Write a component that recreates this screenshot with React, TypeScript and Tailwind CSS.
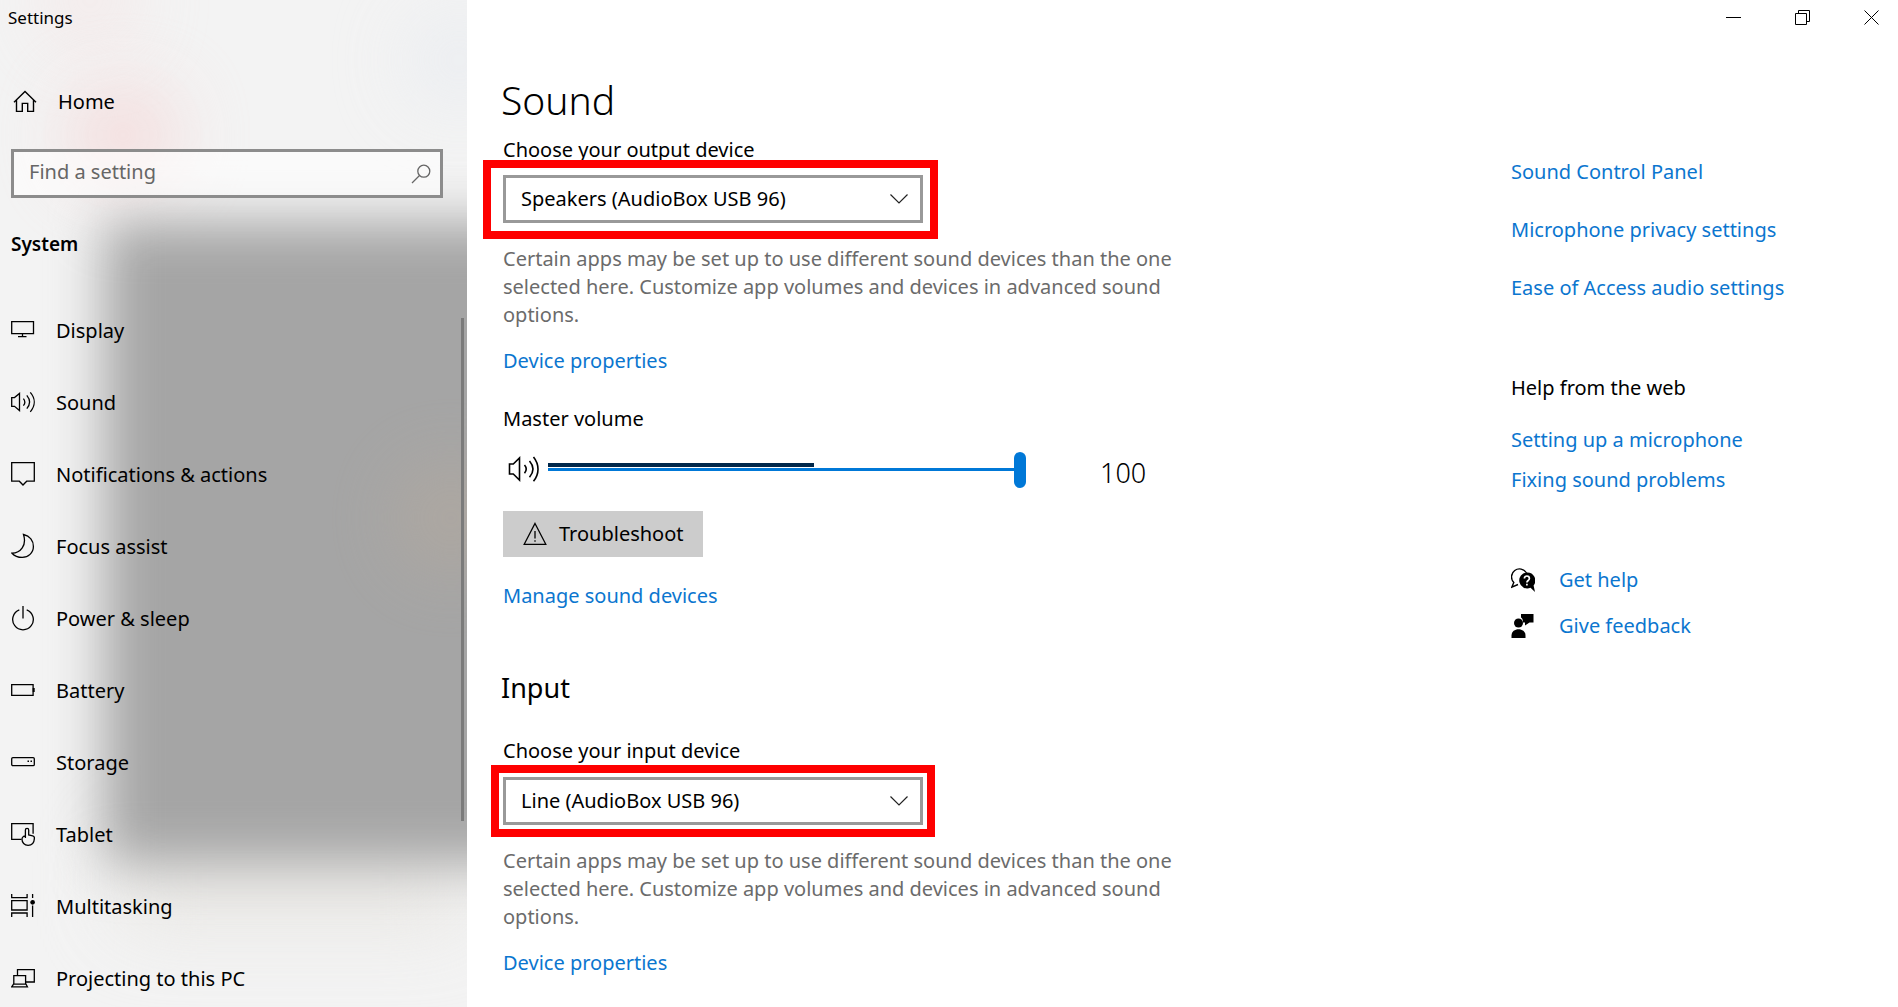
import { useState } from "react";
import type { ReactNode } from "react";

function NavIcon({ children }: { children: ReactNode }) {
  return (
    <svg viewBox="0 0 24 28" className="h-7 w-6 shrink-0" fill="none" stroke="#000" strokeWidth="1.3" aria-hidden="true">
      {children}
    </svg>
  );
}

const navItems: { label: string; icon: ReactNode }[] = [
  { label: "Display", icon: <path d="M.7 4.6h21.8v12H.7zM11.5 16.6v3M7 19.6h8.5" /> },
  {
    label: "Sound",
    icon: <path d="M.7 8.6h2.8l5-4.2v17.2l-5-4.3H.7zM12.4 9.6c2 2.5 2 4.7 0 7M15.8 6.4c3.6 4.3 3.6 9 0 13.3M19.3 3.4c5.2 6 5.2 13.2 0 19.4" />,
  },
  { label: "Notifications & actions", icon: <path d="M.7 1.6h22.6v18.6h-7.6L12 24l-3.7-3.8H.7z" /> },
  {
    label: "Focus assist",
    icon: <path d="M12.5 1.5C19 3 22.4 8 22.4 13.6c0 6.3-5.2 10.8-11.2 10.8-4.2 0-7.8-1.5-10.2-4.2C9.5 20 16 12.5 12.5 1.5z" />,
  },
  { label: "Power & sleep", icon: <path d="M8.3 4.9a10.3 10.3 0 1 0 7.4 0M12 1v12.4" /> },
  {
    label: "Battery",
    icon: (
      <>
        <path d="M.7 7.7h21.4v10.6H.7z" />
        <path d="M22.7 11v4" strokeWidth="2" />
      </>
    ),
  },
  {
    label: "Storage",
    icon: (
      <>
        <rect x=".7" y="8.6" width="22.6" height="8" rx="1.2" />
        <path d="M16.5 12.3h1.5M19.5 12.3h1.5" strokeWidth="1.5" />
      </>
    ),
  },
  {
    label: "Tablet",
    icon: (
      <>
        <path d="M10.5 18.3H.7V2.7h21.4v10" />
        <path d="M14.4 17V9c0-2.1 3.3-2.1 3.3 0v5l4 .8c1.2.3 1.7 1 1.7 2.2-.1 4.400-2 7.300-6.300 7.300-3.800 0-6.100-2.800-6.100-6 0-2 1.400-3.300 3.400-3.300" />
      </>
    ),
  },
  {
    label: "Multitasking",
    icon: (
      <>
        <path d="M.7 1v3.7h15.4V1M.7 7.7h15.4V17H.7zM.7 24v-4h15.4v4M21.6 1v4M21.6 12.5V24" />
        <circle cx="21.6" cy="9.3" r="1.7" fill="#000" />
      </>
    ),
  },
  {
    label: "Projecting to this PC",
    icon: <path d="M6.5 10V4.700h16.800V17h-8.600M2.800 19V10.700h11.800V19M2.500 19.200h12.500l1.400 2.600H.8z" />,
  },
];

function Link({ children }: { children: ReactNode }) {
  return (
    <a href="#" className="text-[#0b76cf] hover:text-gray-500">
      {children}
    </a>
  );
}

function DeviceSelect({ id, value, mark }: { id: string; value: string; mark: string }) {
  return (
    <div className="relative h-12 w-[420px]">
      <select id={id} className="h-full w-full appearance-none border-3 border-[#999999] bg-white pl-[15px] pr-12 text-black outline-none">
        <option>{value}</option>
      </select>
      <svg viewBox="0 0 18 10" className="pointer-events-none absolute right-[15px] top-[19px] h-[10px] w-[18px]" fill="none" stroke="#222" strokeWidth="1.2" aria-hidden="true">
        <path d="M.5 .5 9 9 17.5 .5" />
      </svg>
      <div className={`pointer-events-none absolute border-8 border-[#fe0000] ${mark}`} />
    </div>
  );
}

function AppNote() {
  return (
    <p className="mt-[22px] max-w-[690px] text-[#6b6b6b]">
      Certain apps may be set up to use different sound devices than the one selected here. Customize app volumes and
      devices in advanced sound options.
    </p>
  );
}

function Sidebar() {
  return (
    <aside className="relative flex w-[467px] shrink-0 flex-col overflow-hidden bg-[#f3f3f3]">
      <div className="pointer-events-none absolute inset-0" aria-hidden="true">
        <div className="absolute left-[50px] -top-10 h-20 w-20 rounded-full bg-[#f6dcdc] opacity-60 blur-2xl" />
        <div className="absolute left-[75px] top-[95px] h-20 w-24 rounded-full bg-[#f5d0d0] opacity-90 blur-2xl" />
        <div className="absolute -right-10 top-5 h-20 w-24 rounded-full bg-[#e3e8ef] opacity-70 blur-2xl" />
        <div className="absolute left-[120px] right-0 top-[830px] h-24 bg-[#e6e4e0] opacity-80 blur-2xl" />
        <div className="absolute -right-24 bottom-[144px] left-[104px] top-[222px] bg-[#a5a5a5] blur-[26px]" />
        <div className="absolute -right-8 top-[470px] h-24 w-24 rounded-full bg-[#b5aa9e] opacity-80 blur-2xl" />
      </div>
      <div className="relative flex flex-col">
        <div className="h-9 pl-2 text-[17px] leading-9">Settings</div>
        <a href="#" className="mt-[52px] flex items-center pl-[13px]">
          <svg viewBox="0 0 24 24" className="h-6 w-6" fill="none" stroke="#000" strokeWidth="1.4" aria-hidden="true">
            <path d="M1 12.2 12 1.5l11 10.7M3.5 10v11.4h5.8v-8h5.4v8h5.8V10" />
          </svg>
          <span className="ml-[21px]">Home</span>
        </a>
        <div className="relative ml-[11px] mr-6 mt-[33px] h-[49px]">
          <input
            type="text"
            aria-label="Find a setting"
            placeholder="Find a setting"
            className="h-full w-full border-3 border-[#8c8c8c] bg-white/60 pb-1 pl-[15px] pr-12 outline-none placeholder:text-[#666666]"
          />
          <svg viewBox="0 0 20 20" className="absolute right-3 top-[15px] h-5 w-5" fill="none" stroke="#666" strokeWidth="1.3" aria-hidden="true">
            <circle cx="12.8" cy="7.2" r="6" />
            <path d="M8.5 11.5 1 19" />
          </svg>
        </div>
        <h2 className="mt-8 pl-[11px] text-[19px] font-semibold">System</h2>
        <nav className="mt-[37px]">
          {navItems.map((item) => (
            <a key={item.label} href="#" className="flex h-[72px] items-center gap-[21px] pl-[11px]">
              <NavIcon>{item.icon}</NavIcon>
              <span>{item.label}</span>
            </a>
          ))}
        </nav>
      </div>
      <div className="absolute right-[3px] top-[318px] h-[503px] w-[3px] bg-[#7b7b7b]" />
    </aside>
  );
}

function VolumeRow() {
  const [volume, setVolume] = useState(100);
  return (
    <div className="mt-[18px] flex h-9 items-center">
      <svg viewBox="0 0 32 28" className="ml-[5px] h-7 w-8" fill="none" stroke="#000" strokeWidth="1.6" aria-hidden="true">
        <path d="M1.500 9h3.800L11.500 3v22l-6.200-6H1.500zM16.500 10c2.300 2.700 2.300 5.500 0 8.200M21.500 6c4.500 5.200 4.500 11 0 16.200M25.500 2c6 7.500 6 16.800 0 24.200" />
      </svg>
      <div className="relative ml-2 w-[478px]">
        <input
          type="range"
          aria-label="Master volume"
          value={volume}
          onChange={(e) => setVolume(Number(e.target.value))}
          className="block h-[34px] w-full appearance-none bg-transparent [&::-webkit-slider-runnable-track]:h-[3px] [&::-webkit-slider-runnable-track]:bg-[#0078d7] [&::-webkit-slider-thumb]:-mt-4 [&::-webkit-slider-thumb]:h-9 [&::-webkit-slider-thumb]:w-3 [&::-webkit-slider-thumb]:appearance-none [&::-webkit-slider-thumb]:rounded-full [&::-webkit-slider-thumb]:bg-[#0078d7]"
        />
        <div className="pointer-events-none absolute left-0 top-[11px] h-1 w-[266px] bg-[#00274a]" />
      </div>
      <span className="ml-[74px] pt-2 text-[27px] font-light leading-10">{volume}</span>
    </div>
  );
}

export default function App() {
  return (
    <div className="flex h-screen overflow-hidden bg-white font-['Noto_Sans','Open_Sans',sans-serif] text-[20px] leading-7 text-black">
      <Sidebar />
      <div className="flex min-w-0 flex-1 flex-col">
        <header className="flex h-9 shrink-0 justify-end gap-[15px]">
          <button aria-label="Minimize" className="flex w-[54px] items-center justify-center">
            <svg viewBox="-1 0 16 16" className="h-4 w-4" stroke="#000" aria-hidden="true">
              <path d="M0 7.5h15" />
            </svg>
          </button>
          <button aria-label="Restore" className="flex w-[54px] items-center justify-center">
            <svg viewBox="-1 0 16 16" className="h-4 w-4" fill="none" stroke="#000" aria-hidden="true">
              <path d="M.5 3.5h11v11H.5zM3.5 3.5v-3h11v11h-3" />
            </svg>
          </button>
          <button aria-label="Close" className="flex w-[54px] items-center justify-center">
            <svg viewBox="-1 0 16 16" className="h-4 w-4" stroke="#000" aria-hidden="true">
              <path d="M.5 .5l14 14M14.5 .5l-14 14" />
            </svg>
          </button>
        </header>
        <div className="flex flex-1 justify-between">
          <main className="flex flex-col items-start pl-9 pt-9">
            <h1 className="-ml-0.5 text-[39px] font-light leading-[56px]">Sound</h1>
            <label htmlFor="output" className="mb-[11px] mt-2">Choose your output device</label>
            <DeviceSelect id="output" value="Speakers (AudioBox USB 96)" mark="-left-5 -right-[15px] -top-[15px] -bottom-4" />
            <AppNote />
            <div className="mt-[18px]"><Link>Device properties</Link></div>
            <div className="mt-[30px]">Master volume</div>
            <VolumeRow />
            <button className="mt-6 flex h-[46px] w-[200px] items-center gap-3 bg-[#cccccc] pl-5">
              <svg viewBox="0 0 24 24" className="h-6 w-6" fill="none" stroke="#000" strokeWidth="1.3" aria-hidden="true">
                <path d="M12 1.5 22.8 22.3H1.2zM12 9v7.5M12 18.2v1.6" />
              </svg>
              <span>Troubleshoot</span>
            </button>
            <div className="mt-[25px]"><Link>Manage sound devices</Link></div>
            <h2 className="-ml-0.5 mt-[58px] text-[27px] leading-10">Input</h2>
            <label htmlFor="input" className="mb-3 mt-[29px]">Choose your input device</label>
            <DeviceSelect id="input" value="Line (AudioBox USB 96)" mark="-inset-3" />
            <AppNote />
            <div className="mt-[18px]"><Link>Device properties</Link></div>
          </main>
          <section className="flex w-[387px] shrink-0 flex-col items-start pt-[122px]">
            <div className="flex flex-col gap-[30px]">
              <Link>Sound Control Panel</Link>
              <Link>Microphone privacy settings</Link>
              <Link>Ease of Access audio settings</Link>
            </div>
            <h3 className="mt-[72px]">Help from the web</h3>
            <div className="mt-6 flex flex-col gap-3">
              <Link>Setting up a microphone</Link>
              <Link>Fixing sound problems</Link>
            </div>
            <div className="mt-[72px] flex items-center gap-6">
              <svg viewBox="0 0 24 24" className="h-6 w-6" aria-hidden="true">
                <path d="M7 16.5 .8 19.2 2.8 14.5A8 8 0 1 1 15.5 5" fill="none" stroke="#000" strokeWidth="1.4" />
                <path d="M16 4.5a8 8 0 1 0 3.5 15.3L24 24l-1.4-6.6A8 8 0 0 0 16 4.5z" fill="#000" />
                <path d="M13.4 10.5c0-3.4 5-3.2 5 0 0 2-2.5 2-2.5 4M15.9 15.8v1.8" fill="none" stroke="#fff" strokeWidth="1.7" />
              </svg>
              <Link>Get help</Link>
            </div>
            <div className="mt-[18px] flex items-center gap-6">
              <svg viewBox="0 0 24 24" className="h-6 w-6" aria-hidden="true">
                <path d="M10 0h12.500v8.500h-4L14 11.500V8.500h-2C12 6 11.500 4.500 10 3.500z" />
                <circle cx="7.5" cy="9" r="4.5" />
                <path d="M.5 24v-2.500c0-8.500 14-8.500 14 0V24z" />
              </svg>
              <Link>Give feedback</Link>
            </div>
          </section>
        </div>
      </div>
    </div>
  );
}
